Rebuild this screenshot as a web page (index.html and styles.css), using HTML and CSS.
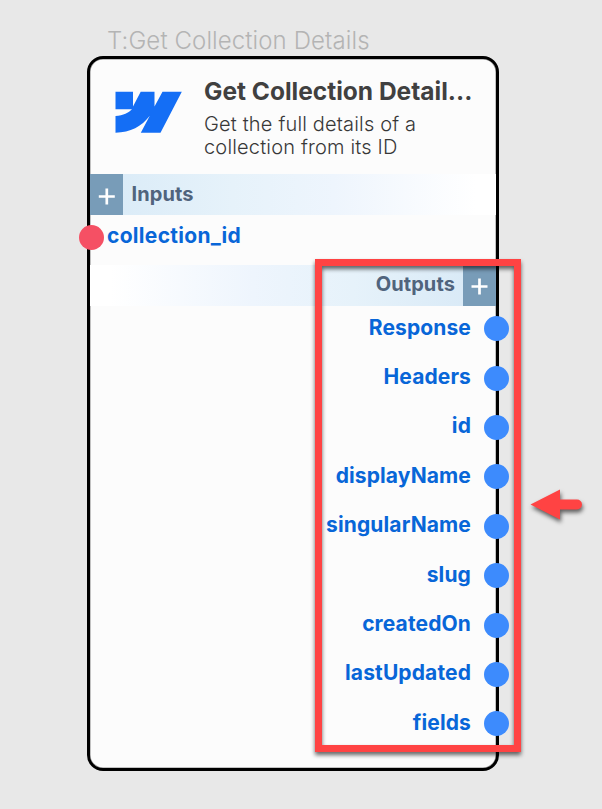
FILE: index.html
```html
<!DOCTYPE html>
<html lang="en">
<head>
<meta charset="utf-8">
<title>Get Collection Details</title>
<link rel="stylesheet" href="styles.css">
</head>
<body>
<main class="canvas">
  <div class="node-label">T:Get Collection Details</div>
  <section class="node">
    <header class="node-header">
      <svg class="logo" viewBox="0 0 66 42" aria-hidden="true"><path d="M0 .800H17.500V15.500L25.200 .800H39V15.500L47 .800H66.300L45 41.800H25.300L34.300 24.800C26 35.500 15 41.500 0 41.800V25C8 24.500 13 22 16.500 18.300H0Z"/></svg>
      <div class="heading">
        <h1>Get Collection Detail...</h1>
        <p>Get the full details of a<br>collection from its ID</p>
      </div>
    </header>
    <div class="bar bar-in"><svg class="plus" viewBox="0 0 33 41"><path d="M8.800 22.500h16M16.800 14.500v16"/></svg><span>Inputs</span></div>
    <div class="inputs"><div class="port"><i class="dot red"></i><span>collection_id</span></div></div>
    <div class="bar bar-out"><span>Outputs</span><svg class="plus" viewBox="0 0 33 41"><path d="M8.500 21.500h16M16.500 13.500v16"/></svg></div>
    <div class="outputs">
      <div class="port"><span>Response</span><i class="dot"></i></div>
      <div class="port"><span>Headers</span><i class="dot"></i></div>
      <div class="port"><span>id</span><i class="dot"></i></div>
      <div class="port"><span>displayName</span><i class="dot"></i></div>
      <div class="port"><span>singularName</span><i class="dot"></i></div>
      <div class="port"><span>slug</span><i class="dot"></i></div>
      <div class="port"><span>createdOn</span><i class="dot"></i></div>
      <div class="port"><span>lastUpdated</span><i class="dot"></i></div>
      <div class="port"><span>fields</span><i class="dot"></i></div>
    </div>
  </section>
  <div class="highlight"></div>
  <svg class="arrow" viewBox="0 0 53 32"><path d="M.500 15.500L30 .500V10.500H47a5 5 0 0 1 0 10H30V30.500Z"/></svg>
</main>
</body>
</html>
```
FILE: styles.css
```css
* { box-sizing: border-box; }
body { margin: 0; background: #e8e8e8; font-family: Inter, sans-serif; }
.canvas { position: relative; height: 809px; padding: 26px 0 0 87px; overflow: hidden; }
.node-label { height: 30px; padding-left: 20px; font-size: 24px; letter-spacing: .1px; line-height: 30px; font-weight: 300; color: #b4b4b4; white-space: nowrap; }
.node { width: 412px; height: 715px; border: 3px solid #000; border-radius: 16px; background: #fcfcfc; box-shadow: inset 0 0 0 .5px #888; }
.node-header { display: flex; height: 115px; padding: 18px 0 0 25px; }
.logo { width: 67px; height: 42px; margin-top: 14px; fill: #146ef5; flex: none; overflow: visible; }
.heading { margin-left: 22px; white-space: nowrap; }
h1 { margin: -1px 0 0; font-size: 24.5px; line-height: 30px; font-weight: 700; color: #404040; }
p { margin: 7px 0 0; font-size: 20px; letter-spacing: .17px; line-height: 23px; font-weight: 300; color: #383838; }
.bar { display: flex; height: 41px; font-size: 20px; letter-spacing: .1px; line-height: 40px; font-weight: 700; color: #50647d; }
.bar span { padding: 0 8px; }
.bar-in { background: linear-gradient(90deg, #d8eaf7, #e6f2fa 35%, #eef5fd 60%, #fff 95%); }
.bar-out { justify-content: flex-end; background: linear-gradient(270deg, #d6e8f6, #e6f2fa 35%, #eef5fd 60%, #fff 95%); }
.bar-in span { padding-left: 8.500px; }
.bar-out span { line-height: 39px; }
.plus { width: 33px; height: 41px; background: #789cb8; fill: none; stroke: #fff; stroke-width: 2.7; flex: none; }
.inputs { height: 50px; }
.port { display: flex; align-items: center; color: #0866d8; font-size: 21px; letter-spacing: .12px; font-weight: 700; white-space: nowrap; }
.port span { position: relative; top: -1.600px; }
.inputs .port { height: 45px; margin-left: -11.500px; gap: 3.500px; letter-spacing: .3px; }
.outputs .port { height: 49.420px; justify-content: flex-end; gap: 13px; margin-right: -13px; position: relative; top: -2px; }
.dot { width: 25px; height: 25px; border-radius: 50%; background: #3d8bfd; flex: none; }
.dot.red { background: #f55064; }
.highlight { position: absolute; left: 315px; top: 259px; width: 206px; height: 493px; border: 7px solid #ff4343; filter: drop-shadow(0 3px 2px #0009); }
.arrow { position: absolute; left: 530px; top: 489px; width: 53px; height: 32px; overflow: visible; fill: #ff4343; filter: drop-shadow(1px 3px 2px #0009); }
```
